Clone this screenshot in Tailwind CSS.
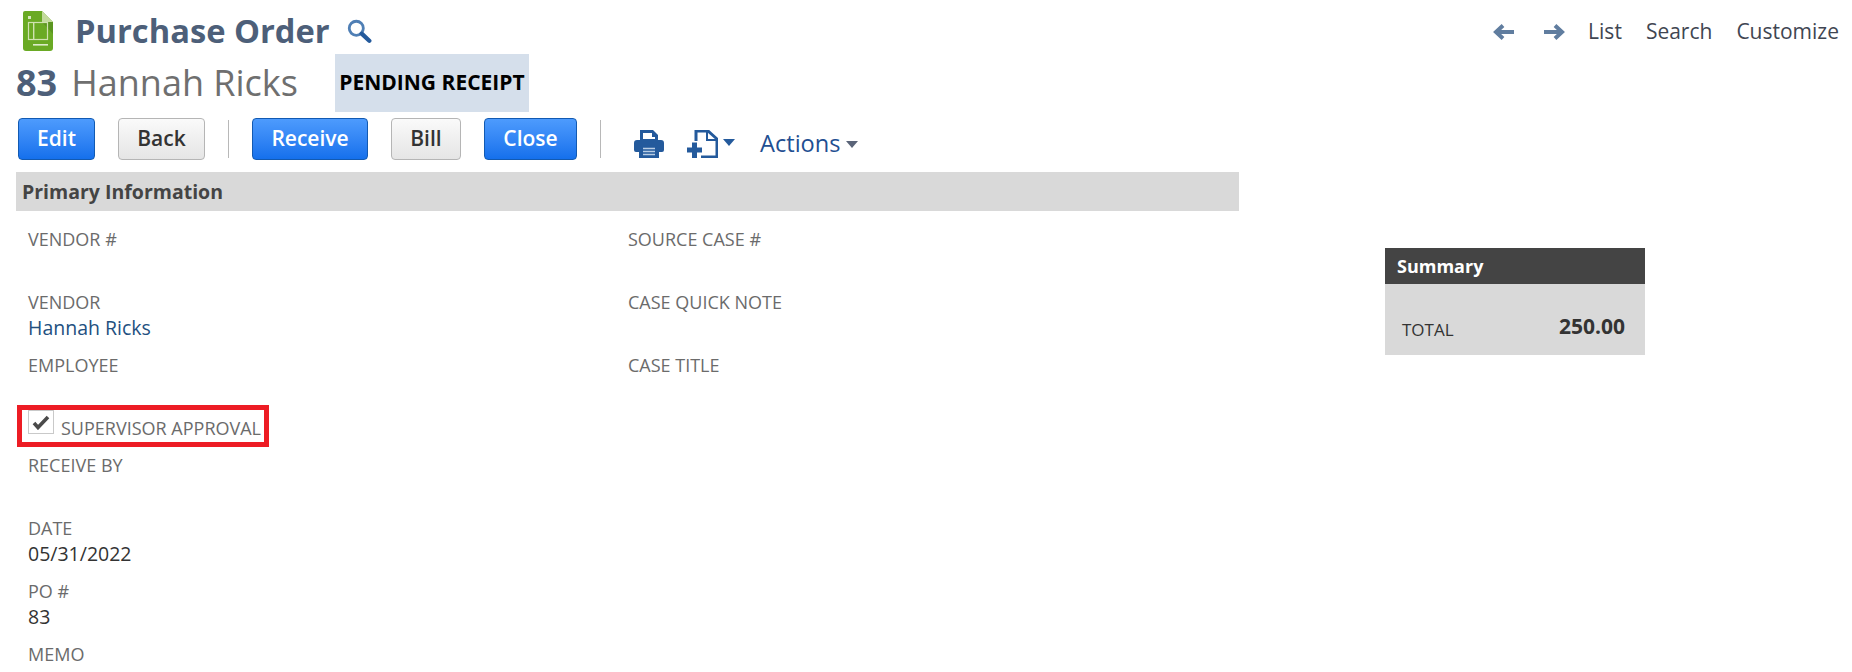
<!DOCTYPE html>
<html lang="en">
<head>
  <meta charset="UTF-8">
  <title>Purchase Order</title>
  <script src="https://cdn.jsdelivr.net/npm/@tailwindcss/browser@4"></script>
</head>
<body class="bg-white font-['Open_Sans',sans-serif] text-[#333]">
  <div class="relative h-[672px] w-[1852px] overflow-hidden">
    <!-- Title row -->
    <div class="flex h-[54px] items-center justify-between pt-[8px] pl-[23px] pr-[13px]">
      <div class="flex items-center">
        <svg class="h-[40px] w-[30px]" viewBox="0 0 30 40">
          <path d="M2 0H19L30 11V37a3 3 0 0 1-3 3H3a3 3 0 0 1-3-3V2a2 2 0 0 1 2-2z" fill="#6aaa24"/>
          <path d="M19 0L30 11H19z" fill="#c3da9c"/>
          <path d="M19 11H30V23z" fill="#5b9620"/>
          <rect x="5" y="5" width="3" height="3" fill="#d8e8c0"/>
          <rect x="5.5" y="11.5" width="19" height="17" fill="none" stroke="#cfe2b0" stroke-width="1.2"/>
          <rect x="10" y="12" width="1.4" height="16" fill="#cfe2b0"/>
          <rect x="10" y="33" width="15" height="1.6" fill="#dcebc8"/>
        </svg>
        <h1 class="ml-[22px] text-[32.7px] leading-none font-bold text-[#4d5f79]">Purchase Order</h1>
        <svg class="ml-[16px] h-[26px] w-[26px]" viewBox="0 0 24 24" fill="none">
          <circle cx="9.5" cy="9.5" r="6.5" stroke="#4f7fb5" stroke-width="2.6"/>
          <path d="M14.5 14.5L21.5 21" stroke="#245a9c" stroke-width="4" stroke-linecap="round"/>
        </svg>
      </div>
      <div class="mt-[2px] flex items-center text-[21px] text-[#3f4652]">
        <svg class="h-[20px] w-[24px]" viewBox="0 0 24 20" fill="none" stroke="#607d9f" stroke-width="4">
          <path d="M22 10H5M11 3.5L4 10l7 6.5"/>
        </svg>
        <svg class="ml-[26px] h-[20px] w-[24px]" viewBox="0 0 24 20" fill="none" stroke="#607d9f" stroke-width="4">
          <path d="M2 10h17M13 3.5l7 6.5-7 6.5"/>
        </svg>
        <a class="ml-[22px]">List</a>
        <a class="ml-[24px]">Search</a>
        <a class="ml-[24px]">Customize</a>
      </div>
    </div>

    <!-- Record name and status -->
    <div class="flex h-[58px] items-center pl-[16px]">
      <span class="text-[36px] leading-none font-bold text-[#4d5f79]">83</span>
      <span class="ml-[14px] text-[36px] leading-none text-[#6f6f6f]">Hannah Ricks</span>
      <span class="ml-[37px] flex h-[58px] w-[194px] items-center justify-center bg-[#d5dfeb] text-[21px] font-bold whitespace-nowrap text-black">PENDING RECEIPT</span>
    </div>

    <!-- Buttons -->
    <div class="mt-[6px] flex h-[42px] items-center pl-[18px] text-[21px] font-semibold">
      <button class="h-[42px] w-[77px] rounded-[4px] border border-[#125ab2] bg-linear-to-b from-[#4d9bfd] to-[#1470ec] text-white">Edit</button>
      <button class="ml-[23px] h-[42px] w-[87px] rounded-[4px] border border-[#b5b5b5] bg-linear-to-b from-[#fafafa] to-[#e5e5e5] text-[#333]">Back</button>
      <div class="mx-[23px] h-[38px] w-px bg-[#b8b8b8]"></div>
      <button class="h-[42px] w-[116px] rounded-[4px] border border-[#125ab2] bg-linear-to-b from-[#4d9bfd] to-[#1470ec] text-white">Receive</button>
      <button class="ml-[23px] h-[42px] w-[70px] rounded-[4px] border border-[#b5b5b5] bg-linear-to-b from-[#fafafa] to-[#e5e5e5] text-[#333]">Bill</button>
      <button class="ml-[23px] h-[42px] w-[93px] rounded-[4px] border border-[#125ab2] bg-linear-to-b from-[#4d9bfd] to-[#1470ec] text-white">Close</button>
      <div class="mx-[23px] h-[38px] w-px bg-[#b8b8b8]"></div>
      <div class="flex items-center pt-[9px]">
        <svg class="ml-[10px] h-[28px] w-[30px]" viewBox="0 0 30 28">
          <path d="M6 0H19L24 5V10H6z" fill="#245a9c"/>
          <path d="M9 3H18V7H21V9H9z" fill="#fff"/>
          <path d="M3 10H27a3 3 0 0 1 3 3v7a2 2 0 0 1-2 2H25V18H5V22H2a2 2 0 0 1-2-2V13a3 3 0 0 1 3-3z" fill="#245a9c"/>
          <path d="M5 16H25V28H5z" fill="#245a9c"/>
          <path d="M9 18.5H21M9 21.5H21M9 24.5H21" stroke="#b9cde4" stroke-width="1.6"/>
        </svg>
        <svg class="ml-[23px] h-[28px] w-[31px]" viewBox="0 0 31 28" fill="none">
          <path d="M9 11V1H21L30 9V27H14" stroke="#245a9c" stroke-width="3"/>
          <path d="M20 1V10H30" stroke="#245a9c" stroke-width="2"/>
          <path d="M0 20H15M7.5 12.5V28" stroke="#245a9c" stroke-width="5"/>
        </svg>
        <svg class="mb-[2px] ml-[5px] h-[7px] w-[12px]" viewBox="0 0 12 7"><path d="M0 0H12L6 7z" fill="#245a9c"/></svg>
        <span class="ml-[25px] text-[23.6px] leading-none font-normal text-[#1f4f92]">Actions</span>
        <svg class="ml-[5px] mt-[2px] h-[7px] w-[12px]" viewBox="0 0 12 7"><path d="M0 0H12L6 7z" fill="#5a6478"/></svg>
      </div>
    </div>

    <!-- Main area -->
    <div class="mt-[12px] flex items-start pl-[16px]">
      <div class="w-[1223px]">
        <div class="flex h-[39px] items-center bg-[#d9d9d9] pl-[6px] text-[19.5px] font-bold text-[#444]">Primary Information</div>
        <div class="flex text-[18px] leading-[26px] text-[#6b6b6b]">
          <div class="w-[600px]">
            <div class="h-[63px] pt-[15px] pl-[12px]">VENDOR #</div>
            <div class="h-[63px] pl-[12px] pt-[15px]">VENDOR<div class="text-[19.5px] text-[#23507f]">Hannah Ricks</div></div>
            <div class="h-[68px] pl-[12px] pt-[15px]">EMPLOYEE</div>
            <div class="relative mb-[5px] ml-[1px] flex h-[42px] w-[252px] items-end border-[5px] border-[#ed1c24] pb-[1px]">
              <span class="absolute top-[0px] left-[6px] flex h-[24px] w-[26px] items-center justify-center border border-[#c9c9c9]">
                <svg class="h-[15px] w-[18px]" viewBox="0 0 18 15" fill="none"><path d="M2 8l4 4.5L16 2" stroke="#4a4a4a" stroke-width="3.6"/></svg>
              </span>
              <span class="ml-[39px] whitespace-nowrap leading-[26px]">SUPERVISOR APPROVAL</span>
            </div>
            <div class="h-[63px] pl-[12px]">RECEIVE BY</div>
            <div class="h-[63px] pl-[12px]">DATE<div class="text-[19.5px] text-[#333]">05/31/2022</div></div>
            <div class="h-[63px] pl-[12px]">PO #<div class="text-[19.5px] text-[#333]">83</div></div>
            <div class="h-[26px] pl-[12px]">MEMO</div>
          </div>
          <div>
            <div class="h-[63px] pt-[15px] pl-[12px]">SOURCE CASE #</div>
            <div class="h-[63px] pt-[15px] pl-[12px]">CASE QUICK NOTE</div>
            <div class="h-[63px] pt-[15px] pl-[12px]">CASE TITLE</div>
          </div>
        </div>
      </div>

      <!-- Summary -->
      <div class="mt-[76px] ml-[146px] w-[260px]">
        <div class="flex h-[36px] items-center bg-[#444] pl-[12px] text-[18px] font-bold text-white">Summary</div>
        <div class="flex h-[71px] items-end justify-between bg-[#d9d9d9] pr-[20px] pb-[12px] pl-[17px]">
          <span class="text-[17px] leading-[26px] text-[#333]">TOTAL</span>
          <span class="mb-[3px] text-[21px] leading-[28px] font-bold text-[#333]">250.00</span>
        </div>
      </div>
    </div>
  </div>
</body>
</html>
